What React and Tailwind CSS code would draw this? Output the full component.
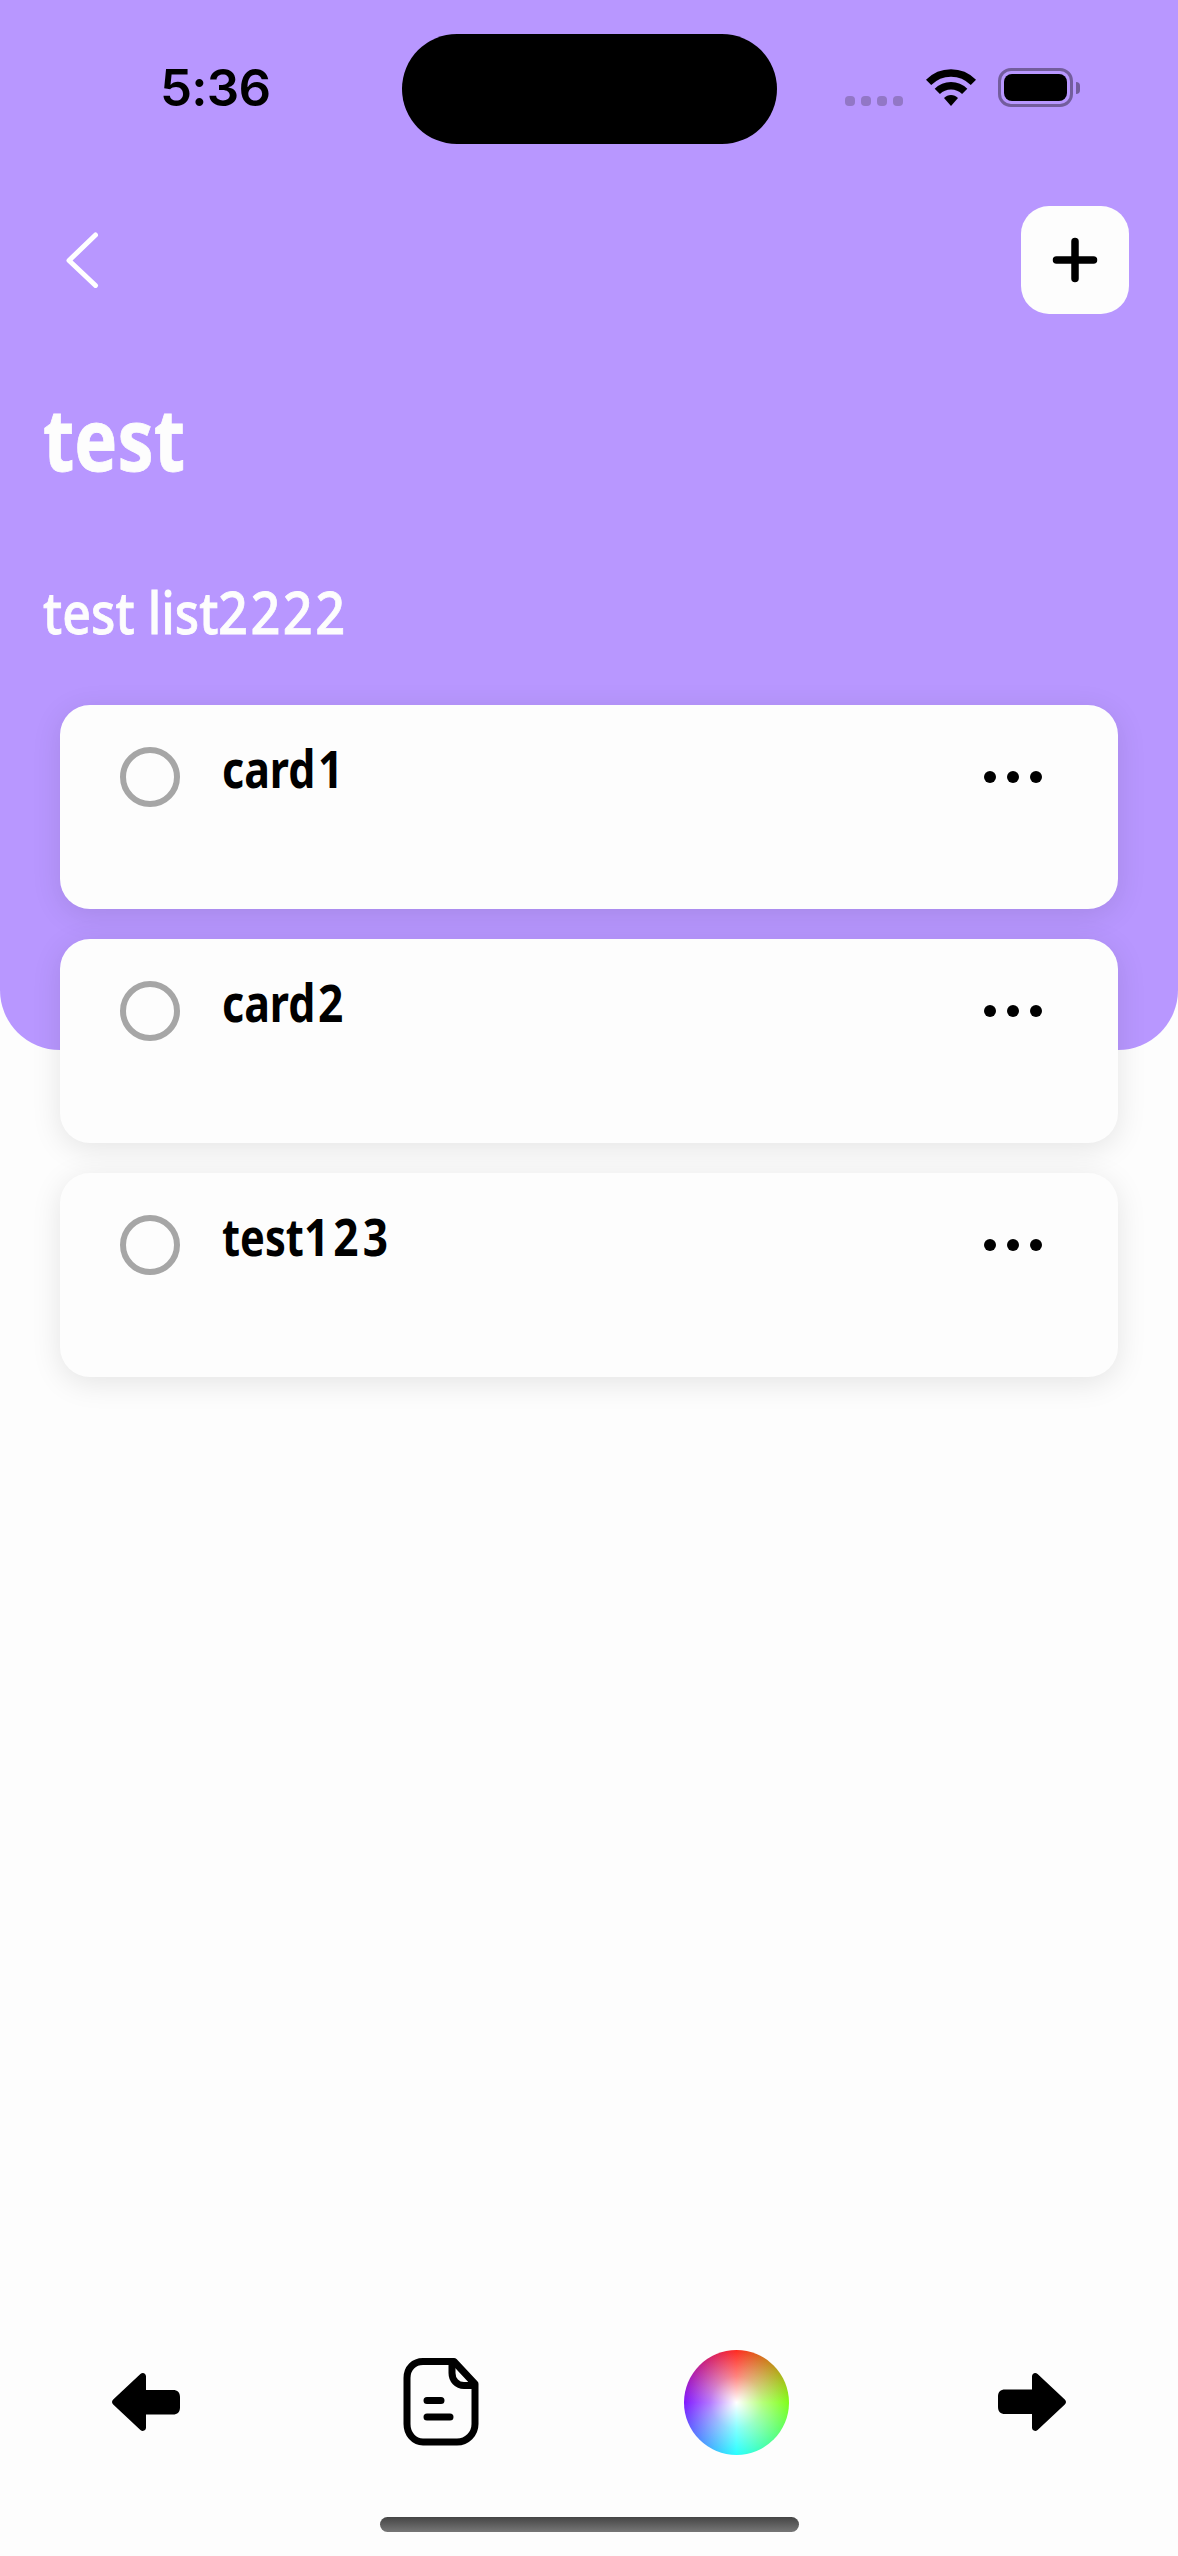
const cards = [
  { word: "card", digits: "1", wordStyle: "w-[96px] scale-x-[0.825]" },
  { word: "card", digits: "2", wordStyle: "w-[96px] scale-x-[0.825]" },
  { word: "test", digits: "123", wordStyle: "w-[82px] scale-x-[0.8]" },
];

function WifiIcon() {
  return (
    <svg width="50" height="37" viewBox="0 0 50 37" fill="none">
      <path d="M2.6 13.4C8.6 7.4 16.5 4 25 4s16.4 3.4 22.4 9.4" stroke="#000" strokeWidth="7.4" />
      <path d="M11.3 22.4c3.7-3.7 8.5-5.7 13.7-5.7s10 2 13.7 5.7" stroke="#000" strokeWidth="7.4" />
      <path d="M25 37l-7-8c2-2 4.3-3 7-3s5 1 7 3z" fill="#000" />
    </svg>
  );
}

function StatusBar() {
  return (
    <div className="flex h-[206px] items-start">
      <div className="mt-[58px] ml-[160px] w-[242px] whitespace-nowrap font-['Inter',sans-serif] text-[51px] font-semibold leading-[60px] tracking-[-0.8px] text-black">
        5:36
      </div>
      <div className="mt-[34px] h-[110px] w-[375px] rounded-full bg-black" />
      <div className="mt-[96px] ml-[68px] flex gap-1.5">
        {[0, 1, 2, 3].map((i) => (
          <i key={i} className="size-[10px] rounded-[4px] bg-[#9277c6]" />
        ))}
      </div>
      <div className="mt-[69px] ml-[23px]">
        <WifiIcon />
      </div>
      <div className="mt-[68px] ml-[22px] flex items-center gap-[3px]">
        <div className="h-[39px] w-[75px] rounded-[13px] border-[3px] border-[#735d9d] p-[3px]">
          <div className="h-full w-full rounded-[8px] bg-black" />
        </div>
        <div className="h-3 w-1 rounded-r-full bg-[#735d9d]" />
      </div>
    </div>
  );
}

function Card({ card }) {
  return (
    <li className="flex h-[204px] rounded-[30px] bg-[#fdfdfd] shadow-[0_6px_30px_rgba(0,0,0,0.1)]">
      <div className="mt-[42px] ml-[60px] size-[60px] shrink-0 rounded-full border-[6px] border-[#a6a6a6]" />
      <div className="mt-[28px] ml-[42px] flex flex-1 whitespace-nowrap text-[52px] font-bold leading-[70px] text-black">
        <span className={`${card.wordStyle} origin-left`}>{card.word}</span>
        <span className="origin-left scale-x-[0.85] tracking-[4.8px]">{card.digits}</span>
      </div>
      <div className="mt-[66px] mr-[76px] flex gap-[11px]">
        {[0, 1, 2].map((i) => (
          <i key={i} className="size-3 rounded-full bg-black" />
        ))}
      </div>
    </li>
  );
}

function ArrowIcon({ className }) {
  return (
    <svg className={className} width="68" height="58" viewBox="0 0 68 58">
      <path
        d="M1.2 26.5 28.4 1C30.7-1 34 .3 34 3.4V17H61c4.5 0 7 2.5 7 7V34.5c0 4.5-2.5 7-7 7H34V54.6c0 3.1-3.3 4.4-5.6 2.4L1.2 31.5c-1.6-1.6-1.6-3.4 0-5z"
        fill="#000"
      />
    </svg>
  );
}

function NoteIcon() {
  return (
    <svg width="76" height="88" viewBox="0 0 76 88" fill="none" stroke="#000" strokeWidth="7" strokeLinecap="round" strokeLinejoin="round">
      <path d="M20 3.5H51L72 26V66c0 10-8 18-18 18H20C11 84 4 76 4 66V20C4 10 11 3.5 20 3.5z" />
      <path d="M49 4V15c0 7 5 12.5 12 12.5H71" />
      <path d="M24 42.5H38M24 59H47" />
    </svg>
  );
}

export default function App() {
  return (
    <div className="flex h-[2556px] w-[1178px] flex-col bg-[#fdfdfd] font-['Noto_Sans',sans-serif]">
      <header className="h-[1050px] shrink-0 rounded-b-[60px] bg-[#b897ff]">
        <StatusBar />
        <div className="flex h-[108px] items-center justify-between pr-[49px] pl-[66px]">
          <svg width="33" height="56" viewBox="0 0 33 56" fill="none" stroke="#fff" strokeWidth="5" strokeLinecap="round" strokeLinejoin="round">
            <path d="M29.5 3 3 28.5 29.5 53.5" />
          </svg>
          <button className="flex size-[108px] items-center justify-center rounded-[28px] bg-[#fdfdfd]">
            <svg width="46" height="46" viewBox="0 0 46 46" stroke="#000" strokeWidth="7.5" strokeLinecap="round">
              <path d="M23 4.5V41.5M4.5 23H41.5" />
            </svg>
          </button>
        </div>
        <h1 className="mt-[64px] ml-[43px] h-[120px] w-[168px] origin-left scale-x-[0.84] text-[86px] font-bold leading-[120px] text-[#fdfdfd] [-webkit-text-stroke:0.8px_#fdfdfd]">
          test
        </h1>
        <h2 className="mt-[74px] ml-[43px] flex h-20 whitespace-nowrap text-[58px] leading-[80px] font-medium text-[#fdfdfd] [-webkit-text-stroke:0.8px_#fdfdfd]">
          <span className="w-[175px] origin-left scale-x-[0.865]">test list</span>
          <span className="origin-left scale-x-[0.9] tracking-[2.8px]">2222</span>
        </h2>
        <ul className="mx-[60px] mt-[53px] flex flex-col gap-[30px]">
          {cards.map((card, i) => (
            <Card key={i} card={card} />
          ))}
        </ul>
      </header>
      <nav className="mt-auto flex h-[106px] items-center pl-[112px]">
        <ArrowIcon />
        <div className="ml-[223px]">
          <NoteIcon />
        </div>
        <div className="ml-[205px] size-[105px] rounded-full bg-[radial-gradient(closest-side,#fff_0%,rgba(255,255,255,0.42)_50%,rgba(255,255,255,0)_100%),conic-gradient(#ff2a20,#80ff18,#28ffff,#8018ff,#ff2a20)]" />
        <ArrowIcon className="ml-[209px] rotate-180" />
      </nav>
      <div className="mx-auto mt-[62px] mb-6 h-[15px] w-[419px] shrink-0 rounded-full bg-linear-to-b from-[#454545] to-[#777777]" />
    </div>
  );
}
